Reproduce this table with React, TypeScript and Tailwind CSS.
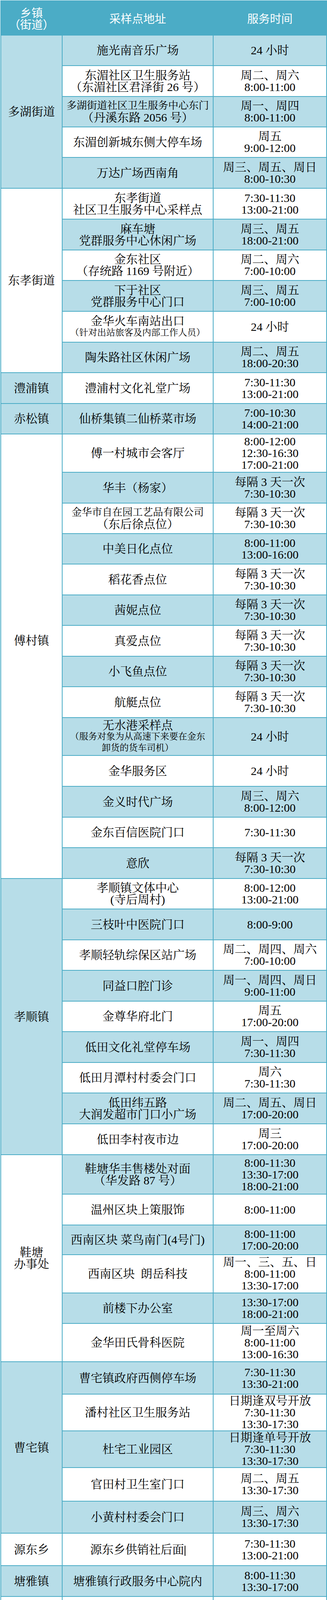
import type { ReactNode } from "react";

type Line = string | { t: ReactNode; c: string };

interface Row {
  addr: Line[];
  time: string[];
  h: string;
}

interface Group {
  name: string[];
  bg: string;
  h: string;
  extra?: string;
  rows: Row[];
}

const BLUE = "bg-[#b7dde8]";
const WHITE = "bg-white";

// line styles
const base = "h-[30px] shrink-0 leading-[30px] whitespace-nowrap";
const small = "h-[29px] shrink-0 leading-[29px] text-[23px] whitespace-nowrap";
const narrow = "h-[30px] shrink-0 leading-[30px] text-[26px] whitespace-nowrap";

const EVERY3 = ["每隔 3 天一次", "7:30-10:30"];

const groups: Group[] = [
  {
    name: ["多湖街道"],
    bg: BLUE,
    h: "h-[392px]",
    rows: [
      { addr: ["施光南音乐广场"], time: ["24 小时"], h: "h-[78px]" },
      {
        addr: ["东湄社区卫生服务站", "（东湄社区君泽街 26 号）"],
        time: ["周二、周六", "8:00-11:00"],
        h: "h-[79px]",
      },
      {
        addr: [{ t: "多湖街道社区卫生服务中心东门", c: narrow }, "（丹溪东路 2056 号）"],
        time: ["周一、周四", "8:00-11:00"],
        h: "h-[78px]",
      },
      { addr: ["东湄创新城东侧大停车场"], time: ["周五", "9:00-12:00"], h: "h-[78px]" },
      { addr: ["万达广场西南角"], time: ["周三、周五、周日", "8:00-10:30"], h: "h-[79px]" },
    ],
  },
  {
    name: ["东孝街道"],
    bg: WHITE,
    h: "h-[472px]",
    rows: [
      {
        addr: ["东孝街道", "社区卫生服务中心采样点"],
        time: ["7:30-11:30", "13:00-21:00"],
        h: "h-[79px]",
      },
      {
        addr: ["麻车塘", "党群服务中心休闲广场"],
        time: ["周三、周五", "18:00-21:00"],
        h: "h-[79px]",
      },
      {
        addr: ["金东社区", "（存统路 1169 号附近）"],
        time: ["周二、周六", "7:00-10:00"],
        h: "h-[78px]",
      },
      {
        addr: ["下于社区", "党群服务中心门口"],
        time: ["周三、周五", "7:00-10:00"],
        h: "h-[79px]",
      },
      {
        addr: ["金华火车南站出口", { t: "（针对出站旅客及内部工作人员）", c: small }],
        time: ["24 小时"],
        h: "h-[79px]",
      },
      { addr: ["陶朱路社区休闲广场"], time: ["周二、周五", "18:00-20:30"], h: "h-[78px]" },
    ],
  },
  {
    name: ["澧浦镇"],
    bg: BLUE,
    h: "h-[79px]",
    rows: [{ addr: ["澧浦村文化礼堂广场"], time: ["7:30-11:30", "13:00-21:00"], h: "h-[79px]" }],
  },
  {
    name: ["赤松镇"],
    bg: BLUE,
    h: "h-[78px]",
    rows: [{ addr: ["仙桥集镇二仙桥菜市场"], time: ["7:00-10:30", "14:00-21:00"], h: "h-[78px]" }],
  },
  {
    name: ["傅村镇"],
    bg: WHITE,
    h: "h-[1138px]",
    extra: "pb-[80px]",
    rows: [
      {
        addr: ["傅一村城市会客厅"],
        time: ["8:00-12:00", "12:30-16:30", "17:00-21:00"],
        h: "h-[98px]",
      },
      { addr: ["华丰（杨家）"], time: EVERY3, h: "h-[79px]" },
      {
        addr: [{ t: "金华市自在园工艺品有限公司", c: narrow }, "（东后徐点位）"],
        time: EVERY3,
        h: "h-[78px]",
      },
      { addr: ["中美日化点位"], time: ["8:00-11:00", "13:00-16:00"], h: "h-[78px]" },
      { addr: ["稻花香点位"], time: EVERY3, h: "h-[79px]" },
      { addr: ["茜妮点位"], time: EVERY3, h: "h-[78px]" },
      { addr: ["真爱点位"], time: EVERY3, h: "h-[79px]" },
      { addr: ["小飞鱼点位"], time: EVERY3, h: "h-[78px]" },
      { addr: ["航艇点位"], time: EVERY3, h: "h-[79px]" },
      {
        addr: [
          { t: "无水港采样点", c: "h-[29px] shrink-0 leading-[29px] whitespace-nowrap" },
          { t: "（服务对象为从高速下来要在金东", c: small },
          { t: "卸货的货车司机）", c: small },
        ],
        time: ["24 小时"],
        h: "h-[97px]",
      },
      { addr: ["金华服务区"], time: ["24 小时"], h: "h-[79px]" },
      { addr: ["金义时代广场"], time: ["周三、周六", "8:00-12:00"], h: "h-[79px]" },
      { addr: ["金东百信医院门口"], time: ["7:30-11:30"], h: "h-[78px]" },
      { addr: ["意欣"], time: EVERY3, h: "h-[79px]" },
    ],
  },
  {
    name: ["孝顺镇"],
    bg: BLUE,
    h: "h-[707px]",
    rows: [
      {
        addr: ["孝顺镇文体中心", "(寺后周村)"],
        time: ["8:00-12:00", "13:00-21:00"],
        h: "h-[78px]",
      },
      { addr: ["三枝叶中医院门口"], time: ["8:00-9:00"], h: "h-[79px]" },
      { addr: ["孝顺轻轨综保区站广场"], time: ["周二、周四、周六", "7:00-10:00"], h: "h-[78px]" },
      { addr: ["同益口腔门诊"], time: ["周一、周四、周日", "9:00-11:00"], h: "h-[79px]" },
      { addr: ["金尊华府北门"], time: ["周五", "17:00-20:00"], h: "h-[78px]" },
      { addr: ["低田文化礼堂停车场"], time: ["周一、周四", "7:30-11:30"], h: "h-[79px]" },
      { addr: ["低田月潭村村委会门口"], time: ["周六", "7:30-11:30"], h: "h-[78px]" },
      {
        addr: ["低田纬五路", "大润发超市门口小广场"],
        time: ["周二、周五、周日", "17:00-20:00"],
        h: "h-[79px]",
      },
      { addr: ["低田李村夜市边"], time: ["周三", "17:00-20:00"], h: "h-[79px]" },
    ],
  },
  {
    name: ["鞋塘", "办事处"],
    bg: WHITE,
    h: "h-[530px]",
    rows: [
      {
        addr: ["鞋塘华丰售楼处对面", "（华发路 87 号）"],
        time: ["8:00-11:30", "13:30-17:00", "18:00-21:00"],
        h: "h-[101px]",
      },
      { addr: ["温州区块上策服饰"], time: ["8:00-11:00"], h: "h-[79px]" },
      { addr: ["西南区块 菜鸟南门(4号门)"], time: ["8:00-11:00", "17:00-20:00"], h: "h-[76px]" },
      {
        addr: ["西南区块\u00a0\u00a0朗岳科技"],
        time: ["周一、三、五、日", "8:00-11:00", "13:30-17:00"],
        h: "h-[98px]",
      },
      { addr: ["前楼下办公室"], time: ["13:30-17:00", "18:00-21:00"], h: "h-[78px]" },
      {
        addr: ["金华田氏骨科医院"],
        time: ["周一至周六", "8:00-11:00", "13:00-16:30"],
        h: "h-[98px]",
      },
    ],
  },
  {
    name: ["曹宅镇"],
    bg: BLUE,
    h: "h-[439px]",
    rows: [
      { addr: ["曹宅镇政府西侧停车场"], time: ["7:30-11:30", "13:30-21:00"], h: "h-[83px]" },
      {
        addr: ["潘村社区卫生服务站"],
        time: ["日期逢双号开放", "7:30-11:30", "13:30-17:30"],
        h: "h-[94px]",
      },
      {
        addr: ["杜宅工业园区"],
        time: ["日期逢单号开放", "7:30-11:30", "13:30-17:30"],
        h: "h-[94px]",
      },
      { addr: ["官田村卫生室门口"], time: ["周二、周五", "13:30-17:30"], h: "h-[86px]" },
      { addr: ["小黄村村委会门口"], time: ["周三、周六", "13:30-17:30"], h: "h-[82px]" },
    ],
  },
  {
    name: ["源东乡"],
    bg: WHITE,
    h: "h-[83px]",
    rows: [
      {
        addr: [
          {
            t: (
              <>
                源东乡供销社后面
                <span className="ml-[1px] inline-block h-[26px] w-[2px] bg-black align-middle" />
              </>
            ),
            c: base,
          },
        ],
        time: ["7:30-11:30", "13:00-21:00"],
        h: "h-[83px]",
      },
    ],
  },
  {
    name: ["塘雅镇"],
    bg: BLUE,
    h: "h-[79px]",
    rows: [{ addr: ["塘雅镇行政服务中心院内"], time: ["8:00-11:30", "13:30-17:00"], h: "h-[79px]" }],
  },
  {
    name: ["岭下镇"],
    bg: WHITE,
    h: "h-[157px]",
    rows: [
      { addr: ["岭五村追远亭广场"], time: ["7:30-11:00", "14:00-21:00"], h: "h-[77px]" },
      {
        addr: ["新亭村", "（新亭村公交车站）"],
        time: ["周三、周五、周日", "7:00-10:00"],
        h: "h-[80px]",
      },
    ],
  },
  {
    name: ["江东镇"],
    bg: BLUE,
    h: "h-[157px]",
    rows: [
      { addr: ["横店村委大楼西侧停车场"], time: ["7:30-11:00", "14:00-21:00"], h: "h-[78px]" },
      {
        addr: ["江岭高新智造区", "爱特汽车采样点"],
        time: ["周一、周五", "7:30-11:00"],
        h: "h-[79px]",
      },
    ],
  },
];

const cell =
  "flex min-h-0 flex-col items-center justify-center border-r-2 border-b-2 border-[#4bacc6]";

function Lines({ lines }: { lines: Line[] }) {
  return (
    <>
      {lines.map((l, i) =>
        typeof l === "string" ? (
          <div key={i} className={base}>
            {l}
          </div>
        ) : (
          <div key={i} className={l.c}>
            {l.t}
          </div>
        ),
      )}
    </>
  );
}

export default function App() {
  let idx = 0;
  return (
    <div className="w-[836px] bg-white pt-[1px] pl-[1px]">
      <div className="w-[835px] border-t-2 border-l-2 border-[#4bacc6] font-['Liberation_Serif','Noto_Serif_CJK_SC','Noto_Sans_CJK_SC',serif] text-[30px] leading-[30px] text-black">
        {/* header */}
        <div className="flex h-[88px] shrink-0 bg-[#4bacc6] font-['Noto_Sans_CJK_SC',sans-serif] text-[29px] text-white">
          <div className={`${cell} w-[157px]`}>
            <div className="h-[30px] leading-[30px]">乡镇</div>
            <div className="h-[30px] leading-[30px]">（街道）</div>
          </div>
          <div className={`${cell} w-[386px]`}>采样点地址</div>
          <div className={`${cell} w-[290px]`}>服务时间</div>
        </div>

        {groups.map((g, gi) => (
          <div key={gi} className={`flex overflow-hidden ${g.h}`}>
            <div className={`${cell} w-[157px] shrink-0 ${g.bg} ${g.extra ?? ""}`}>
              {g.name.map((n) => (
                <div key={n} className={base}>
                  {n}
                </div>
              ))}
            </div>
            <div className="flex min-h-0 flex-col">
              {g.rows.map((r, ri) => {
                const bg = idx++ % 2 === 0 ? BLUE : WHITE;
                return (
                  <div key={ri} className={`flex shrink-0 overflow-hidden ${r.h}`}>
                    <div className={`${cell} w-[386px] ${bg}`}>
                      <Lines lines={r.addr} />
                    </div>
                    <div className={`${cell} w-[290px] ${bg}`}>
                      {r.time.map((t, ti) => (
                        <div key={ti} className={base}>
                          {t}
                        </div>
                      ))}
                    </div>
                  </div>
                );
              })}
            </div>
          </div>
        ))}
      </div>
    </div>
  );
}
